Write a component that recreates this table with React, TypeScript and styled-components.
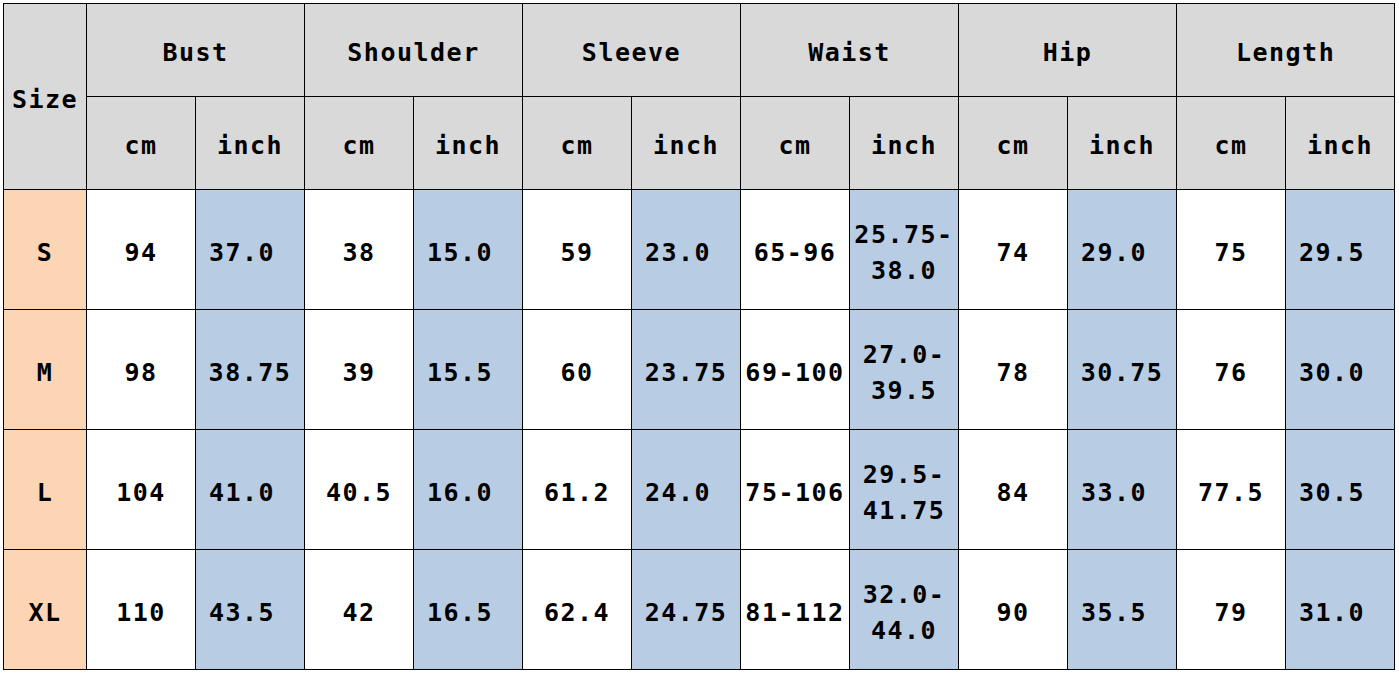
import styled, { createGlobalStyle } from 'styled-components';

const GlobalStyle = createGlobalStyle`
  html, body {
    margin: 0;
    padding: 0;
    background: #ffffff;
  }
  body {
    padding: 3px 0 0 3px;
    font-family: "DejaVu Sans Mono", "Liberation Mono", monospace;
  }
`;

const Table = styled.table`
  border-collapse: collapse;
  table-layout: fixed;
  width: 1392px;
  font-family: "DejaVu Sans Mono", "Liberation Mono", monospace;
  font-weight: bold;
  font-size: 25px;
  letter-spacing: 1.5px;
  color: #000;
`;

const HeadCell = styled.th<{ $tall?: boolean }>`
  background: #d9d9d9;
  border: 1px solid #000;
  height: ${p => (p.$tall ? 180 : 87)}px;
  padding: 5px 0 0;
  text-align: center;
  vertical-align: middle;
  font-weight: bold;
`;

const SizeCell = styled.td`
  background: #fcd5b4;
  border: 1px solid #000;
  height: 113px;
  padding: 6px 0 0;
  text-align: center;
  vertical-align: middle;
`;

const ValueCell = styled.td<{ $inch?: boolean; $tail?: boolean }>`
  background: ${p => (p.$inch ? '#b8cce4' : '#ffffff')};
  border: 1px solid #000;
  padding: 6px ${p => (p.$tail ? 16 : 0)}px 0 0;
  text-align: center;
  vertical-align: middle;
  line-height: 36px;
  word-break: normal;
`;

const groups = ['Bust', 'Shoulder', 'Sleeve', 'Waist', 'Hip', 'Length'];

const rows: { size: string; values: string[] }[] = [
  { size: 'S', values: ['94', '37.0', '38', '15.0', '59', '23.0', '65-96', '25.75-38.0', '74', '29.0', '75', '29.5'] },
  { size: 'M', values: ['98', '38.75', '39', '15.5', '60', '23.75', '69-100', '27.0-39.5', '78', '30.75', '76', '30.0'] },
  { size: 'L', values: ['104', '41.0', '40.5', '16.0', '61.2', '24.0', '75-106', '29.5-41.75', '84', '33.0', '77.5', '30.5'] },
  { size: 'XL', values: ['110', '43.5', '42', '16.5', '62.4', '24.75', '81-112', '32.0-44.0', '90', '35.5', '79', '31.0'] },
];

export default function App() {
  return (
    <>
      <GlobalStyle />
      <Table>
        <colgroup>
          <col style={{ width: 83 }} />
          {Array.from({ length: 12 }).map((_, i) => (
            <col key={i} style={{ width: 109 }} />
          ))}
        </colgroup>
        <thead>
          <tr>
            <HeadCell rowSpan={2} $tall>Size</HeadCell>
            {groups.map(g => (
              <HeadCell key={g} colSpan={2}>{g}</HeadCell>
            ))}
          </tr>
          <tr>
            {groups.map(g => [
              <HeadCell key={g + 'cm'}>cm</HeadCell>,
              <HeadCell key={g + 'in'}>inch</HeadCell>,
            ])}
          </tr>
        </thead>
        <tbody>
          {rows.map(r => (
            <tr key={r.size}>
              <SizeCell>{r.size}</SizeCell>
              {r.values.map((v, i) => (
                <ValueCell key={i} $inch={i % 2 === 1} $tail={i % 2 === 1 && v.length === 4}>
                  {v}
                </ValueCell>
              ))}
            </tr>
          ))}
        </tbody>
      </Table>
    </>
  );
}
